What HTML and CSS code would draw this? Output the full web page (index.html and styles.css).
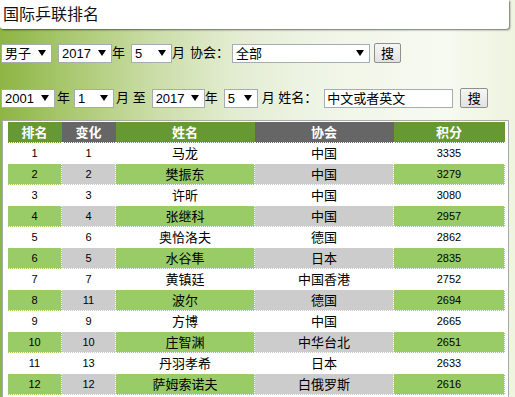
FILE: index.html
```html
<!DOCTYPE html>
<html lang="zh">
<head>
<meta charset="utf-8">
<title>国际乒联排名</title>
<link rel="stylesheet" href="styles.css">
</head>
<body>
<div class="titlebar">国际乒联排名</div>
<form class="filters">
  <div class="row row1">
    <span class="sel w51 ml1"><span class="val">男子</span><i class="arr"></i></span>
    <span class="sel w54 ml6"><span class="val">2017</span><i class="arr"></i></span>
    <span class="lbl">年</span>
    <span class="sel w41 ml6"><span class="val">5</span><i class="arr"></i></span>
    <span class="lbl">月</span>
    <span class="lbl ml5">协会：</span>
    <span class="sel w138 ml3"><span class="val">全部</span><i class="arr"></i></span>
    <button type="button" class="btn w27 ml4">搜</button>
  </div>
  <div class="row row2">
    <span class="sel w54 ml1"><span class="val">2001</span><i class="arr"></i></span>
    <span class="lbl ml2">年</span>
    <span class="sel w40 ml4"><span class="val">1</span><i class="arr"></i></span>
    <span class="lbl ml2">月 至</span>
    <span class="sel w53 ml6"><span class="val">2017</span><i class="arr"></i></span>
    <span class="lbl">年</span>
    <span class="sel w34 ml6"><span class="val">5</span><i class="arr"></i></span>
    <span class="lbl ml4">月 姓名：</span>
    <span class="input ml7">中文或者英文</span>
    <button type="button" class="btn w28 ml7">搜</button>
  </div>
</form>
<div class="panel">
  <table class="rank">
    <colgroup>
      <col class="c1"><col class="c2"><col class="c3"><col class="c4"><col class="c5">
    </colgroup>
    <thead>
      <tr><th class="g">排名</th><th class="d">变化</th><th class="g">姓名</th><th class="d">协会</th><th class="g">积分</th></tr>
    </thead>
    <tbody>
      <tr><td class="num">1</td><td class="num">1</td><td>马龙</td><td>中国</td><td class="num">3335</td></tr>
      <tr class="alt"><td class="num">2</td><td class="num">2</td><td>樊振东</td><td>中国</td><td class="num">3279</td></tr>
      <tr><td class="num">3</td><td class="num">3</td><td>许昕</td><td>中国</td><td class="num">3080</td></tr>
      <tr class="alt"><td class="num">4</td><td class="num">4</td><td>张继科</td><td>中国</td><td class="num">2957</td></tr>
      <tr><td class="num">5</td><td class="num">6</td><td>奥恰洛夫</td><td>德国</td><td class="num">2862</td></tr>
      <tr class="alt"><td class="num">6</td><td class="num">5</td><td>水谷隼</td><td>日本</td><td class="num">2835</td></tr>
      <tr><td class="num">7</td><td class="num">7</td><td>黄镇廷</td><td>中国香港</td><td class="num">2752</td></tr>
      <tr class="alt"><td class="num">8</td><td class="num">11</td><td>波尔</td><td>德国</td><td class="num">2694</td></tr>
      <tr><td class="num">9</td><td class="num">9</td><td>方博</td><td>中国</td><td class="num">2665</td></tr>
      <tr class="alt"><td class="num">10</td><td class="num">10</td><td>庄智渊</td><td>中华台北</td><td class="num">2651</td></tr>
      <tr><td class="num">11</td><td class="num">13</td><td>丹羽孝希</td><td>日本</td><td class="num">2633</td></tr>
      <tr class="alt"><td class="num">12</td><td class="num">12</td><td>萨姆索诺夫</td><td>白俄罗斯</td><td class="num">2616</td></tr>
    </tbody>
  </table>
</div>
</body>
</html>
```

FILE: styles.css
```css
html, body {
  margin: 0;
  padding: 0;
}
body {
  font-family: "Liberation Sans", "Noto Sans CJK SC", sans-serif;
  color: #000;
  background: linear-gradient(to right, #8db544 0px, #a6c66a 60px, #c9dca5 150px, #e2ecd0 230px, #eff5e6 320px, #f7faf1 440px, #eef4df 515px);
  min-height: 397px;
}
.titlebar {
  width: 509px;
  height: 29px;
  box-sizing: border-box;
  background: #fff;
  border-radius: 0 0 3px 3px;
  box-shadow: 1px 1px 2px rgba(0, 0, 0, 0.55);
  font-size: 16px;
  line-height: 29px;
  padding-left: 3px;
  color: #111;
}
.filters {
  margin: 0;
}
.row {
  display: flex;
  align-items: center;
  height: 20px;
  font-size: 13px;
}
.row1 { margin-top: 14px; }
.row2 { margin-top: 25px; }
.lbl {
  white-space: pre;
  font-size: 13px;
  line-height: 20px;
}
.sel {
  display: flex;
  align-items: center;
  justify-content: space-between;
  box-sizing: border-box;
  height: 19px;
  background: #fff;
  border: 1px solid #a5acb2;
  padding: 0 5px 0 3px;
  font-size: 13px;
}
.val { line-height: 17px; }
.arr {
  display: block;
  width: 0;
  height: 0;
  border-left: 4px solid transparent;
  border-right: 4px solid transparent;
  border-top: 6px solid #000;
}
.input {
  box-sizing: border-box;
  width: 129px;
  height: 19px;
  background: #fff;
  border: 1px solid #a5acb2;
  font-size: 13px;
  line-height: 17px;
  padding-left: 2px;
}
.btn {
  box-sizing: border-box;
  height: 20px;
  padding: 0;
  font-family: "Noto Sans CJK SC", sans-serif;
  font-size: 13px;
  line-height: 18px;
  color: #000;
  background: linear-gradient(#f6f6f6, #e2e2e2);
  border: 1px solid #8f8f8f;
  border-radius: 2px;
}
.w27 { width: 27px; }
.w28 { width: 28px; }
.w34 { width: 34px; }
.w40 { width: 40px; }
.w41 { width: 41px; }
.w51 { width: 51px; }
.w53 { width: 53px; }
.w54 { width: 54px; }
.w138 { width: 138px; }
.ml1 { margin-left: 1px; }
.ml2 { margin-left: 2px; }
.ml3 { margin-left: 3px; }
.ml4 { margin-left: 4px; }
.ml5 { margin-left: 5px; }
.ml6 { margin-left: 6px; }
.ml7 { margin-left: 7px; }

.panel {
  margin: 12px 0 0 2px;
  width: 497px;
  background: #fff;
  border: 1px solid #a8a8a8;
  padding: 1px 4px 10px 4px;
}
.rank {
  width: 497px;
  border-collapse: collapse;
  table-layout: fixed;
  font-family: "Noto Sans CJK SC", sans-serif;
}
.c1 { width: 54px; }
.c2 { width: 54px; }
.c3 { width: 139px; }
.c4 { width: 139px; }
.c5 { width: 111px; }
.rank th {
  height: 20px;
  padding: 0;
  color: #fff;
  font-size: 13px;
  font-weight: bold;
  line-height: 20px;
}
.rank th.g { background: #669933; }
.rank th.d { background: #666666; }
.rank td {
  height: 20px;
  padding: 0;
  text-align: center;
  font-size: 13px;
  line-height: 20px;
  border: 1px dotted #fff;
}
.rank td.num {
  font-family: "Liberation Sans", sans-serif;
  font-size: 11px;
}
.rank tr.alt td { background: #99cc66; }
.rank tr.alt td:nth-child(2),
.rank tr.alt td:nth-child(4) { background: #cccccc; }
```
